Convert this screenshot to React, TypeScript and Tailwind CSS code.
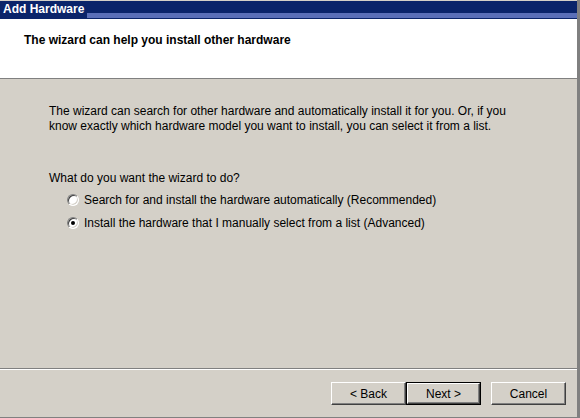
import React from 'react'

const font = { fontFamily: '"Liberation Sans", Arial, sans-serif' }

const Radio = ({ checked, label }: { checked?: boolean; label: string }) => (
	<div className="flex items-center gap-[5px] h-[13px]">
		<span className="relative w-[12px] h-[12px] rounded-full bg-white border border-t-[#808080] border-l-[#808080] border-b-[#ffffff] border-r-[#ffffff] shadow-[inset_1px_1px_0_#404040,inset_-1px_-1px_0_#d4d0c8] flex items-center justify-center">
			{checked && <span className="w-[4px] h-[4px] rounded-full bg-black" />}
		</span>
		<span>{label}</span>
	</div>
)

const Button = ({ label, primary }: { label: string; primary?: boolean }) => (
	<div className={primary ? 'border border-black' : ''}>
		<div
			className={`flex items-center justify-center bg-[#d4d0c8] text-black text-[12px] border-t border-l border-t-white border-l-white border-b border-r border-b-[#404040] border-r-[#404040] shadow-[inset_-1px_-1px_0_#808080] ${
				primary ? 'w-[73px] h-[21px]' : 'w-[75px] h-[23px]'
			}`}
		>
			{label}
		</div>
	</div>
)

export default function App() {
	return (
		<div
			className="w-[580px] h-[418px] bg-[#d4d0c8] flex flex-col text-[12px] text-black border-r-[3px] border-r-[#808080] border-b border-b-[#808080] overflow-hidden"
			style={font}
		>
			{/* title bar */}
			<div className="flex h-[19px] shrink-0 border-t border-t-[#d4d0c8]">
				<div className="bg-[#0a246a] text-white font-bold text-[12px] leading-[17px] pl-[3px] pr-[3px] whitespace-nowrap">
					Add Hardware
				</div>
				<div className="flex-1 flex flex-col">
					<div className="h-[12px] bg-[#0a246a]" />
					<div className="h-[6px] bg-[#5a6fb8] border-b border-b-[#0a246a]" />
				</div>
			</div>

			{/* header */}
			<div className="h-[60px] shrink-0 bg-white border-b border-b-[#808080] pl-[24px] pt-[12px]">
				<div className="font-bold">The wizard can help you install other hardware</div>
			</div>

			{/* body */}
			<div className="flex-1 pl-[49px] pt-[25px]">
				<p className="leading-[15px] whitespace-nowrap">
					The wizard can search for other hardware and automatically install it for you. Or, if you
					<br />
					know exactly which hardware model you want to install, you can select it from a list.
				</p>
				<p className="mt-[37px] leading-[15px]">What do you want the wizard to do?</p>
				<div className="flex flex-col gap-[10px] pl-[18px] mt-[7px]">
					<Radio label="Search for and install the hardware automatically (Recommended)" />
					<Radio checked label="Install the hardware that I manually select from a list (Advanced)" />
				</div>
			</div>

			{/* footer */}
			<div className="h-[49px] shrink-0 border-t border-t-[#808080] shadow-[inset_0_1px_0_#ffffff] flex items-start justify-end pt-[13px] pr-[11px]">
				<div className="flex items-center">
					<Button label="< Back" />
					<Button label="Next >" primary />
					<div className="w-[10px]" />
					<Button label="Cancel" />
				</div>
			</div>
		</div>
	)
}
